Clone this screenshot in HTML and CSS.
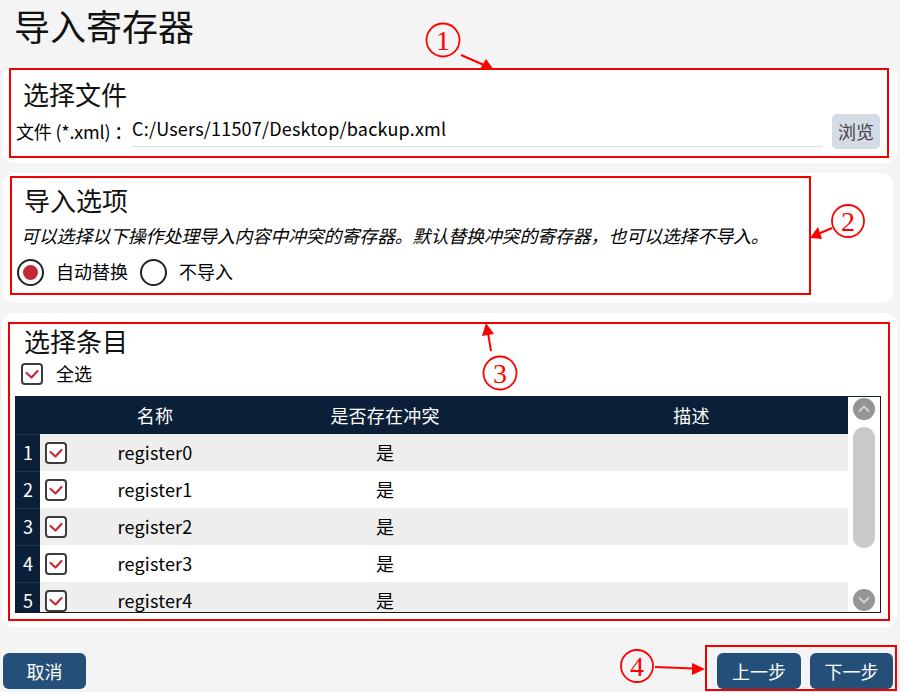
FILE: index.html
```html
<!DOCTYPE html>
<html lang="zh-CN">
<head>
<meta charset="utf-8">
<title>导入寄存器</title>
<link rel="stylesheet" href="styles.css">
</head>
<body>
<div class="page">
  <h1 class="title">导入寄存器</h1>

  <section class="card card-file">
    <div class="mark mark-file">
      <h2 class="card-title">选择文件</h2>
      <div class="file-row">
        <span class="file-label">文件 (*.xml) ：</span>
        <div class="file-input">C:/Users/11507/Desktop/backup.xml</div>
        <button class="browse">浏览</button>
      </div>
    </div>
  </section>

  <section class="card card-opts">
    <div class="mark mark-opts">
      <h2 class="card-title">导入选项</h2>
      <p class="desc">可以选择以下操作处理导入内容中冲突的寄存器。默认替换冲突的寄存器，也可以选择不导入。</p>
      <div class="radios">
        <span class="radio on"></span><span class="radio-label">自动替换</span>
        <span class="radio"></span><span class="radio-label">不导入</span>
      </div>
    </div>
  </section>

  <section class="card card-items">
    <div class="mark mark-items">
      <h2 class="card-title">选择条目</h2>
      <div class="select-all">
        <svg class="cb" viewBox="0 0 22 22"><rect x="1" y="1" width="20" height="20" rx="3"/><path d="M5.5 10 L10.5 14.5 L16.5 8"/></svg>
        <span class="select-label">全选</span>
      </div>
      <div class="table">
        <div class="grid">
          <div class="row head">
            <div class="cell"></div>
            <div class="cell"></div>
            <div class="cell c">名称</div>
            <div class="cell c">是否存在冲突</div>
            <div class="cell c">描述</div>
          </div>
          <div class="row odd">
            <div class="cell num">1</div>
            <div class="cell chk"><svg class="cb" viewBox="0 0 22 22"><rect x="1" y="1" width="20" height="20" rx="3"/><path d="M5.5 10 L10.5 14.5 L16.5 8"/></svg></div>
            <div class="cell c">register0</div>
            <div class="cell c">是</div>
            <div class="cell c"></div>
          </div>
          <div class="row">
            <div class="cell num">2</div>
            <div class="cell chk"><svg class="cb" viewBox="0 0 22 22"><rect x="1" y="1" width="20" height="20" rx="3"/><path d="M5.5 10 L10.5 14.5 L16.5 8"/></svg></div>
            <div class="cell c">register1</div>
            <div class="cell c">是</div>
            <div class="cell c"></div>
          </div>
          <div class="row odd">
            <div class="cell num">3</div>
            <div class="cell chk"><svg class="cb" viewBox="0 0 22 22"><rect x="1" y="1" width="20" height="20" rx="3"/><path d="M5.5 10 L10.5 14.5 L16.5 8"/></svg></div>
            <div class="cell c">register2</div>
            <div class="cell c">是</div>
            <div class="cell c"></div>
          </div>
          <div class="row">
            <div class="cell num">4</div>
            <div class="cell chk"><svg class="cb" viewBox="0 0 22 22"><rect x="1" y="1" width="20" height="20" rx="3"/><path d="M5.5 10 L10.5 14.5 L16.5 8"/></svg></div>
            <div class="cell c">register3</div>
            <div class="cell c">是</div>
            <div class="cell c"></div>
          </div>
          <div class="row odd">
            <div class="cell num">5</div>
            <div class="cell chk"><svg class="cb" viewBox="0 0 22 22"><rect x="1" y="1" width="20" height="20" rx="3"/><path d="M5.5 10 L10.5 14.5 L16.5 8"/></svg></div>
            <div class="cell c">register4</div>
            <div class="cell c">是</div>
            <div class="cell c"></div>
          </div>
        </div>
        <div class="scroll">
          <svg class="sb-btn" viewBox="0 0 22 22"><circle cx="11" cy="11" r="11"/><path d="M6.5 13 L11 8.5 L15.5 13"/></svg>
          <div class="thumb"></div>
          <svg class="sb-btn down" viewBox="0 0 22 22"><circle cx="11" cy="11" r="11"/><path d="M6.5 9 L11 13.5 L15.5 9"/></svg>
        </div>
      </div>
    </div>
  </section>

  <div class="footer">
    <button class="btn cancel">取消</button>
    <div class="mark mark-nav">
      <button class="btn prev">上一步</button>
      <button class="btn next">下一步</button>
    </div>
  </div>
</div>

<svg class="annotations" viewBox="0 0 900 692" width="900" height="692">
  <g class="anno">
    <circle cx="443" cy="40" r="16.5"/>
    <text x="443" y="50">1</text>
    <line x1="461" y1="55" x2="484" y2="65"/>
    <polygon points="494,70 480,69 486,59"/>

    <circle cx="848" cy="221" r="16"/>
    <text x="848" y="231">2</text>
    <line x1="832" y1="228" x2="818" y2="234"/>
    <polygon points="810,238 818,227 822,239"/>

    <circle cx="500" cy="373" r="16.5"/>
    <text x="500" y="383">3</text>
    <line x1="491" y1="351" x2="488" y2="333"/>
    <polygon points="486,323 482,336 494,334"/>

    <circle cx="637" cy="666" r="16"/>
    <text x="637" y="676">4</text>
    <line x1="655" y1="667" x2="694" y2="668.5"/>
    <polygon points="705,669 692,663 692,675"/>
  </g>
</svg>
</body>
</html>
```

FILE: styles.css
```css
html, body {
  margin: 0;
  padding: 0;
}

body {
  background: #f4f4f4;
  font-family: "Noto Sans CJK SC", "Noto Sans", sans-serif;
  color: #000;
  width: 900px;
  height: 692px;
  overflow: hidden;
  position: relative;
}

.page {
  display: flex;
  flex-direction: column;
  height: 692px;
}

.title {
  margin: 0;
  height: 67px;
  padding-left: 14px;
  font-size: 36px;
  font-weight: 400;
  line-height: 50px;
  color: #111;
}

.card {
  background: #fff;
  border-radius: 12px;
  display: flex;
  flex-direction: column;
  box-sizing: border-box;
}

.mark {
  border: 2px solid #f20000;
  box-sizing: border-box;
}

.card-title {
  margin: 0 0 0 7px;
  font-size: 26px;
  font-weight: 400;
  line-height: 32px;
  color: #111;
}

/* card 1 */
.card-file {
  margin: 0 3px 0 2px;
  height: 96px;
}

.mark-file {
  margin: 1px 8px 0 7px;
  height: 90px;
  padding: 0 7px 0 5px;
}

.mark-file .card-title {
  margin-top: 8px;
}

.file-row {
  display: flex;
  align-items: center;
  height: 36px;
  margin-top: 3px;
  font-size: 18px;
}

.file-label {
  margin-right: 0;
  white-space: nowrap;
  letter-spacing: -0.2px;
}

.file-input {
  flex: 1;
  align-self: stretch;
  display: flex;
  align-items: center;
  padding: 0 0 3px 0;
  border-bottom: 1px solid #dadde0;
  margin-bottom: 2px;
  letter-spacing: 0.2px;
}

.browse {
  width: 48px;
  height: 35px;
  margin-left: 10px;
  border: 0;
  border-radius: 5px;
  background: #d3dbe5;
  color: #444;
  font-family: inherit;
  font-size: 18px;
  padding: 0;
}

/* card 2 */
.card-opts {
  margin: 10px 7px 0 3px;
  height: 130px;
}

.mark-opts {
  margin: 3px 0 0 7px;
  width: 801px;
  height: 119px;
  padding: 0 5px;
}

.mark-opts .card-title {
  margin-top: 6px;
}

.desc {
  margin: 7px 0 0 4px;
  font-style: italic;
  font-size: 18px;
  line-height: 24px;
  white-space: nowrap;
  letter-spacing: -0.2px;
}

.radios {
  display: flex;
  align-items: center;
  height: 30px;
  margin-top: 10px;
  font-size: 18px;
}

.radio {
  width: 27px;
  height: 27px;
  border: 2.5px solid #222;
  border-radius: 50%;
  box-sizing: border-box;
  display: flex;
  align-items: center;
  justify-content: center;
  flex: none;
}

.radio.on::after {
  content: "";
  width: 15px;
  height: 15px;
  border-radius: 50%;
  background: #c42836;
}

.radio-label {
  margin-left: 12px;
  margin-right: 12px;
  padding-bottom: 2px;
}

/* card 3 */
.card-items {
  margin: 10px 3px 0 2px;
  height: 314px;
}

.mark-items {
  margin: 9px 7px 0 6px;
  height: 299px;
  padding: 0 7px 0 5px;
}

.mark-items .card-title {
  margin-left: 9px;
  margin-top: 1px;
}

.select-all {
  display: flex;
  align-items: center;
  height: 22px;
  margin: 6px 0 0 6px;
  font-size: 18px;
}

.cb {
  width: 22px;
  height: 22px;
  flex: none;
}

.cb rect {
  fill: #fff;
  stroke: #3c3c3c;
  stroke-width: 2;
}

.cb path {
  fill: none;
  stroke: #c8283a;
  stroke-width: 2.2;
  stroke-linecap: round;
  stroke-linejoin: round;
}

.select-label {
  margin-left: 13px;
  padding-bottom: 2px;
}

.table {
  margin-top: 11px;
  height: 217px;
  border: 1px solid #1a1a1a;
  border-left-color: #0b1f38;
  border-top-color: #0b1f38;
  box-sizing: border-box;
  display: flex;
}

.grid {
  flex: 1;
  overflow: hidden;
}

.row {
  display: grid;
  grid-template-columns: 24px 35px 160px 300px 1fr;
  height: 37px;
  font-size: 18px;
}

.row.odd {
  background: #eeeeee;
}

.row.head {
  background: #0b1f38;
  color: #fff;
}

.cell {
  display: flex;
  align-items: center;
  overflow: hidden;
  white-space: nowrap;
}

.cell.c {
  justify-content: center;
  padding-bottom: 2px;
  letter-spacing: 0.2px;
}

.cell.num {
  background: #0b1f38;
  color: #fff;
  justify-content: center;
  padding-bottom: 2px;
  box-shadow: inset 0 1px 0 #22344c;
}

.cell.chk {
  padding-left: 5px;
}

.scroll {
  width: 32px;
  background: #fff;
  display: flex;
  flex-direction: column;
  align-items: center;
}

.sb-btn {
  width: 22px;
  height: 22px;
  margin-top: 1px;
  flex: none;
}

.sb-btn circle {
  fill: #959595;
}

.sb-btn path {
  fill: none;
  stroke: #d0d0d0;
  stroke-width: 2;
  stroke-linecap: round;
  stroke-linejoin: round;
}

.sb-btn.down {
  margin-top: 41px;
}

.thumb {
  width: 22px;
  height: 121px;
  margin-top: 7px;
  border-radius: 11px;
  background: #c9c9c9;
}

/* footer */
.footer {
  display: flex;
  justify-content: space-between;
  margin-top: 18px;
}

.btn {
  border: 0;
  border-radius: 6px;
  background: #234f78;
  color: #fff;
  font-family: inherit;
  font-size: 18px;
  padding: 0;
  height: 36px;
}

.cancel {
  margin: 8px 0 0 3px;
  width: 83px;
}

.mark-nav {
  width: 192px;
  height: 46px;
  display: flex;
  gap: 9px;
  padding: 6px 0 0 10px;
  margin-right: 3px;
}

.prev {
  width: 84px;
}

.next {
  width: 83px;
}

/* annotation overlay */
.annotations {
  position: absolute;
  left: 0;
  top: 0;
  pointer-events: none;
}

.anno circle {
  fill: none;
  stroke: #f00;
  stroke-width: 1.8;
}

.anno text {
  fill: #f00;
  font-family: "Liberation Serif", "DejaVu Serif", serif;
  font-size: 28px;
  text-anchor: middle;
}

.anno line {
  stroke: #f00;
  stroke-width: 2;
}

.anno polygon {
  fill: #f00;
}
```
